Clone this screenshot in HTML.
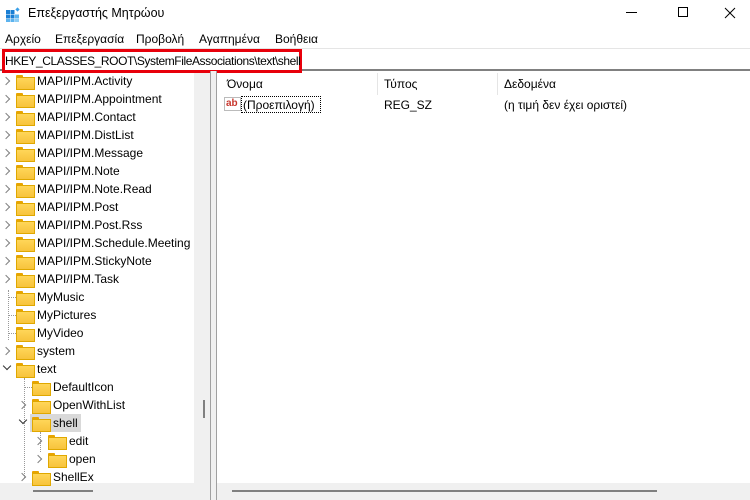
<!DOCTYPE html>
<html><head><meta charset="utf-8"><style>
*{margin:0;padding:0;box-sizing:border-box}
body{width:750px;height:500px;overflow:hidden;background:#fff;font-family:"Liberation Sans",sans-serif;font-size:12px;color:#000;position:relative}
.a{position:absolute;white-space:nowrap}
.f{position:absolute;width:17px;height:13px}
.f:before{content:"";position:absolute;left:0;top:0;width:7px;height:3px;background:#e8a400;border-radius:1px 1px 0 0}
.f:after{content:"";position:absolute;left:0;top:2px;width:17px;height:11px;background:linear-gradient(#ffd659,#f7c33c);border:1px solid #e0a800}
.c{position:absolute;width:6px;height:6px;border-right:1.3px solid #808080;border-bottom:1.3px solid #808080;transform:rotate(-45deg)}
.d{position:absolute;width:6px;height:6px;border-right:1.5px solid #333;border-bottom:1.5px solid #333;transform:rotate(45deg)}
</style></head><body>
<!-- title -->
<div class="a" style="left:6px;top:7px;width:14px;height:14px">
<svg width="16" height="16"><g fill="#1a7fd4"><rect x="0" y="3" width="4" height="4"/><rect x="4.5" y="3" width="4" height="4"/><rect x="0" y="7.5" width="4" height="4"/><rect x="4.5" y="7.5" width="4" height="4"/><rect x="9" y="7.5" width="4" height="4" fill="#5cb3ee"/><rect x="0" y="12" width="4" height="3" fill="#5cb3ee"/><rect x="4.5" y="12" width="4" height="3" fill="#5cb3ee"/><rect x="9" y="12" width="4" height="3" fill="#8ccdf5"/><rect x="10" y="1" width="3" height="3" fill="#3aa0e8" transform="rotate(45 11.5 2.5)"/></g></svg></div>
<div class="a" style="left:28px;top:6px;font-size:12.5px">Επεξεργαστής Μητρώου</div>
<div class="a" style="left:626px;top:12px;width:11px;height:1px;background:#000"></div>
<div class="a" style="left:678px;top:7px;width:10px;height:10px;border:1px solid #000"></div>
<svg class="a" style="left:724px;top:7px" width="12" height="12"><path d="M1 1L11 11M11 1L1 11" stroke="#000" stroke-width="1"/></svg>
<!-- menu -->
<div class="a" style="left:5px;top:32px">Αρχείο</div>
<div class="a" style="left:55px;top:32px">Επεξεργασία</div>
<div class="a" style="left:136px;top:32px">Προβολή</div>
<div class="a" style="left:199px;top:32px">Αγαπημένα</div>
<div class="a" style="left:275px;top:32px">Βοήθεια</div>
<!-- address -->
<div class="a" style="left:0;top:48px;width:750px;height:1px;background:#e5e5e5"></div>
<div class="a" style="left:0;top:69px;width:750px;height:2px;background:#808080"></div>
<div class="a" style="left:2px;top:49px;width:300px;height:24px;border:3px solid #e8000b;background:#fff"></div>
<div class="a" style="left:5px;top:54px;letter-spacing:-0.42px">HKEY_CLASSES_ROOT\SystemFileAssociations\text\shell</div>
<!-- tree panels -->
<div class="a" style="left:194px;top:73px;width:16px;height:427px;background:#f0f0f0"></div>
<div class="a" style="left:203px;top:400px;width:2px;height:18px;background:#808080"></div>
<div class="a" style="left:0;top:483px;width:210px;height:17px;background:#f0f0f0"></div>
<div class="a" style="left:33px;top:490px;width:60px;height:2px;background:#808080"></div>
<div class="a" style="left:210px;top:71px;width:7px;height:429px;background:#f0f0f0;border-left:1px solid #a0a0a0;border-right:1px solid #a0a0a0"></div>
<div class="a" style="left:217px;top:483px;width:533px;height:17px;background:#f0f0f0"></div>
<div class="a" style="left:232px;top:490px;width:425px;height:2px;background:#808080"></div>
<!-- dotted lines -->
<div class="a" style="left:8px;top:290px;height:50px;border-left:1px dotted #999"></div>
<div class="a" style="left:8px;top:297px;width:8px;border-top:1px dotted #999"></div>
<div class="a" style="left:8px;top:315px;width:8px;border-top:1px dotted #999"></div>
<div class="a" style="left:8px;top:333px;width:8px;border-top:1px dotted #999"></div>
<div class="a" style="left:24px;top:378px;height:100px;border-left:1px dotted #999"></div>
<div class="a" style="left:24px;top:387px;width:8px;border-top:1px dotted #999"></div>
<div class="a" style="left:40px;top:432px;height:20px;border-left:1px dotted #999"></div>
<!-- tree rows -->
<div class="c" style="left:3px;top:78px"></div><div class="f" style="left:16px;top:75px"></div><div class="a" style="left:37px;top:74px">MAPI/IPM.Activity</div>
<div class="c" style="left:3px;top:96px"></div><div class="f" style="left:16px;top:93px"></div><div class="a" style="left:37px;top:92px">MAPI/IPM.Appointment</div>
<div class="c" style="left:3px;top:114px"></div><div class="f" style="left:16px;top:111px"></div><div class="a" style="left:37px;top:110px">MAPI/IPM.Contact</div>
<div class="c" style="left:3px;top:132px"></div><div class="f" style="left:16px;top:129px"></div><div class="a" style="left:37px;top:128px">MAPI/IPM.DistList</div>
<div class="c" style="left:3px;top:150px"></div><div class="f" style="left:16px;top:147px"></div><div class="a" style="left:37px;top:146px">MAPI/IPM.Message</div>
<div class="c" style="left:3px;top:168px"></div><div class="f" style="left:16px;top:165px"></div><div class="a" style="left:37px;top:164px">MAPI/IPM.Note</div>
<div class="c" style="left:3px;top:186px"></div><div class="f" style="left:16px;top:183px"></div><div class="a" style="left:37px;top:182px">MAPI/IPM.Note.Read</div>
<div class="c" style="left:3px;top:204px"></div><div class="f" style="left:16px;top:201px"></div><div class="a" style="left:37px;top:200px">MAPI/IPM.Post</div>
<div class="c" style="left:3px;top:222px"></div><div class="f" style="left:16px;top:219px"></div><div class="a" style="left:37px;top:218px">MAPI/IPM.Post.Rss</div>
<div class="c" style="left:3px;top:240px"></div><div class="f" style="left:16px;top:237px"></div><div class="a" style="left:37px;top:236px">MAPI/IPM.Schedule.Meeting</div>
<div class="c" style="left:3px;top:258px"></div><div class="f" style="left:16px;top:255px"></div><div class="a" style="left:37px;top:254px">MAPI/IPM.StickyNote</div>
<div class="c" style="left:3px;top:276px"></div><div class="f" style="left:16px;top:273px"></div><div class="a" style="left:37px;top:272px">MAPI/IPM.Task</div>
<div class="f" style="left:16px;top:291px"></div><div class="a" style="left:37px;top:290px">MyMusic</div>
<div class="f" style="left:16px;top:309px"></div><div class="a" style="left:37px;top:308px">MyPictures</div>
<div class="f" style="left:16px;top:327px"></div><div class="a" style="left:37px;top:326px">MyVideo</div>
<div class="c" style="left:3px;top:348px"></div><div class="f" style="left:16px;top:345px"></div><div class="a" style="left:37px;top:344px">system</div>
<div class="d" style="left:4px;top:363px"></div><div class="f" style="left:16px;top:363px"></div><div class="a" style="left:37px;top:362px">text</div>
<div class="f" style="left:32px;top:381px"></div><div class="a" style="left:53px;top:380px">DefaultIcon</div>
<div class="c" style="left:19px;top:402px"></div><div class="f" style="left:32px;top:399px"></div><div class="a" style="left:53px;top:398px">OpenWithList</div>
<div class="a" style="left:30px;top:414px;width:51px;height:18px;background:#d9d9d9"></div>
<div class="d" style="left:20px;top:417px"></div><div class="f" style="left:32px;top:417px"></div><div class="a" style="left:53px;top:416px">shell</div>
<div class="c" style="left:35px;top:438px"></div><div class="f" style="left:48px;top:435px"></div><div class="a" style="left:69px;top:434px">edit</div>
<div class="c" style="left:35px;top:456px"></div><div class="f" style="left:48px;top:453px"></div><div class="a" style="left:69px;top:452px">open</div>
<div class="c" style="left:19px;top:474px"></div><div class="f" style="left:32px;top:471px"></div><div class="a" style="left:53px;top:470px">ShellEx</div>
<!-- right pane -->
<div class="a" style="left:227px;top:77px">Όνομα</div>
<div class="a" style="left:377px;top:73px;width:1px;height:22px;background:#e5e5e5"></div>
<div class="a" style="left:384px;top:77px">Τύπος</div>
<div class="a" style="left:497px;top:73px;width:1px;height:22px;background:#e5e5e5"></div>
<div class="a" style="left:504px;top:77px">Δεδομένα</div>
<div class="a" style="left:224px;top:97px;width:17px;height:14px;border:1px solid #bbb;background:#fff;color:#c8372d;font-weight:bold;font-size:10px;line-height:11px;padding-left:1px">ab</div>
<div class="a" style="left:241px;top:96px;width:80px;height:17px;border:1px dotted #000"></div>
<div class="a" style="left:243px;top:98px">(Προεπιλογή)</div>
<div class="a" style="left:384px;top:98px">REG_SZ</div>
<div class="a" style="left:504px;top:98px">(η τιμή δεν έχει οριστεί)</div>
</body></html>
